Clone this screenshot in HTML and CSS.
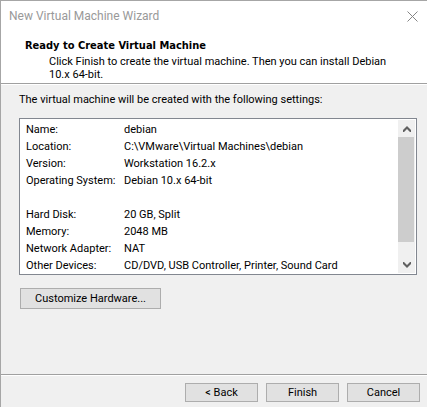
FILE: index.html
```html
<!DOCTYPE html>
<html lang="en">
<head>
<meta charset="utf-8">
<title>New Virtual Machine Wizard</title>
<link rel="stylesheet" href="styles.css">
</head>
<body>
<main class="wizard">
  <header class="head">
    <div class="titlebar">
      <span class="title">New Virtual Machine Wizard</span>
      <button class="close" type="button" aria-label="Close">
        <svg width="11" height="11" viewBox="0 0 11 11"><path d="M.5.5l10 10M10.500.5l-10 10" fill="none" stroke="#858585"/></svg>
      </button>
    </div>
    <h1 class="heading">Ready to Create Virtual Machine</h1>
    <p class="lead">Click Finish to create the virtual machine. Then you can install Debian 10.x 64-bit.</p>
  </header>
  <section class="content">
    <p class="intro" id="intro">The virtual machine will be created with the following settings:</p>
    <div class="summary">
      <table class="settings" aria-labelledby="intro">
        <tbody>
          <tr><th scope="row">Name:</th><td>debian</td></tr>
          <tr><th scope="row">Location:</th><td>C:\VMware\Virtual Machines\debian</td></tr>
          <tr><th scope="row">Version:</th><td>Workstation 16.2.x</td></tr>
          <tr><th scope="row">Operating System:</th><td>Debian 10.x 64-bit</td></tr>
        </tbody>
        <tbody>
          <tr class="gap"><td colspan="2"></td></tr>
          <tr><th scope="row">Hard Disk:</th><td>20 GB, Split</td></tr>
          <tr><th scope="row">Memory:</th><td>2048 MB</td></tr>
          <tr><th scope="row">Network Adapter:</th><td>NAT</td></tr>
          <tr><th scope="row">Other Devices:</th><td>CD/DVD, USB Controller, Printer, Sound Card</td></tr>
        </tbody>
      </table>
      <div class="scrollbar">
        <button class="arrow" type="button" aria-label="Scroll up">
          <svg width="8" height="6" viewBox="0 0 8 6"><path d="M0 6V4l4-4 4 4v2H7L4 3 1 6z" fill="#606060"/></svg>
        </button>
        <div class="track"><div class="thumb"></div></div>
        <button class="arrow" type="button" aria-label="Scroll down">
          <svg width="8" height="6" viewBox="0 0 8 6"><path d="M0 0v2l4 4 4-4V0H7L4 3 1 0z" fill="#606060"/></svg>
        </button>
      </div>
    </div>
    <button class="btn customize" type="button">Customize Hardware...</button>
  </section>
  <footer class="actions">
    <button class="btn" type="button">&lt; Back</button>
    <button class="btn" type="button">Finish</button>
    <button class="btn" type="button">Cancel</button>
  </footer>
</main>
</body>
</html>
```
FILE: styles.css
```css
* {
  box-sizing: border-box;
}

body {
  margin: 0;
  background: #f0f0f0;
  color: #000;
  font: 11px/13px Roboto, "Noto Sans", sans-serif;
}

h1,
p {
  margin: 0;
}

button {
  padding: 0;
  font: inherit;
  color: inherit;
}

.wizard {
  display: flex;
  flex-direction: column;
  min-height: 100vh;
  border: solid #a6a6a6;
  border-width: 1px 0 0 1px;
}

.head {
  padding-bottom: 2px;
  background: #fff;
  border-bottom: 1px solid #a0a0a0;
}

.titlebar {
  display: flex;
  align-items: center;
  justify-content: space-between;
  height: 30px;
  padding: 0 9px 0 8px;
}

.title {
  font-size: 12px;
  line-height: 16px;
  color: #999;
}

.close {
  display: flex;
  background: none;
  border: 0;
}

.heading {
  padding: 7px 24px 1px;
  font: bold 11px/16px "DejaVu Sans Condensed", sans-serif;
}

.lead {
  padding: 0 40px 0 48px;
}

.content {
  flex: 1;
  padding: 8px 10px 8px 18px;
  border-top: 1px solid #fff;
}

.intro {
  margin-bottom: 12px;
}

.summary {
  display: flex;
  height: 157px;
  padding: 1px;
  background: #fff;
  border: 1px solid #828790;
  overflow: hidden;
}

.settings {
  flex: 1;
  align-self: flex-start;
  border-collapse: collapse;
  margin: 1px 0 0 5px;
}

.settings th,
.settings td {
  height: 17px;
  padding: 0;
  font-weight: normal;
  text-align: left;
  white-space: nowrap;
}

.settings th {
  width: 98px;
}

.scrollbar {
  display: flex;
  flex-direction: column;
  width: 17px;
  background: #f0f0f0;
}

.arrow {
  display: flex;
  align-items: center;
  justify-content: center;
  height: 17px;
  background: none;
  border: 0;
}

.track {
  flex: 1;
}

.thumb {
  height: 88%;
  margin-right: 1px;
  background: #cdcdcd;
}

.btn {
  width: 73px;
  height: 19px;
  background: #e1e1e1;
  border: 1px solid #adadad;
}

.customize {
  display: block;
  width: 141px;
  height: 21px;
  margin: 13px 0 0 1px;
}

.actions {
  display: flex;
  justify-content: flex-end;
  gap: 8px;
  padding: 8px 7px 5px;
  border-top: 1px solid #a0a0a0;
  box-shadow: inset 0 1px #fff;
}
```
